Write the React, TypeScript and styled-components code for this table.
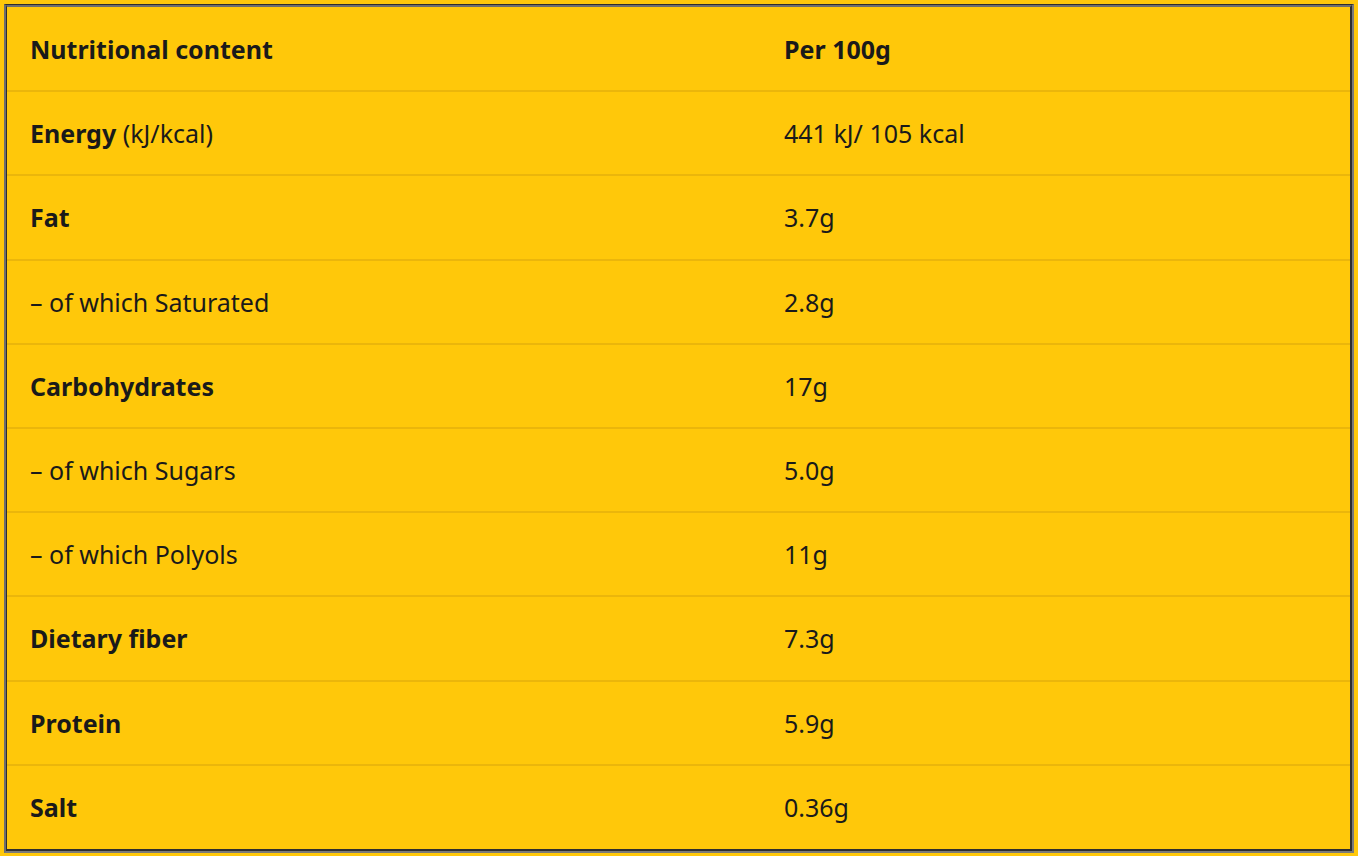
import { createGlobalStyle } from "styled-components";
import styled from "styled-components";

const GlobalStyle = createGlobalStyle`
  html, body {
    margin: 0;
    padding: 0;
    background: #ffc80a;
  }
  body {
    font-family: "Noto Sans", "Open Sans", sans-serif;
    color: #1a1a1a;
  }
`;

const Page = styled.div`
  padding: 4px 4px 4px 4px;
  width: 1358px;
  box-sizing: border-box;
`;

const OuterFrame = styled.div`
  border-top: 1px solid #2e2e2e;
  border-left: 2px solid #6e6e6e;
  border-right: 2px solid #7a7a7a;
  border-bottom: 2px solid #7a7a7a;
`;

const InnerFrame = styled.div`
  border-top: 2px solid #6e6e6e;
  border-left: 1px solid #2e2e2e;
  border-right: 2px solid #2e2e2e;
  border-bottom: 2px solid #2e2e2e;
`;

const Table = styled.table`
  width: 100%;
  border-collapse: collapse;
  font-size: 25px;
  line-height: 32px;
`;

const Row = styled.tr`
  height: 84.2px;
  border-top: 2px solid #ebb60b;

  &:first-child {
    border-top: none;
  }
`;

const Cell = styled.td<{ $first?: boolean; $bold?: boolean }>`
  padding: 0 23px;
  width: ${(p) => (p.$first ? "754px" : "auto")};
  font-weight: ${(p) => (p.$bold ? 700 : 400)};
  vertical-align: middle;
  box-sizing: border-box;
`;

const Strong = styled.strong`
  font-weight: 700;
`;

type Item = { label: React.ReactNode; value: string; bold?: boolean };

const rows: Item[] = [
  {
    label: (
      <>
        <Strong>Energy</Strong> (kJ/kcal)
      </>
    ),
    value: "441 kJ/ 105 kcal",
  },
  { label: "Fat", value: "3.7g", bold: true },
  { label: "– of which Saturated", value: "2.8g" },
  { label: "Carbohydrates", value: "17g", bold: true },
  { label: "– of which Sugars", value: "5.0g" },
  { label: "– of which Polyols", value: "11g" },
  { label: "Dietary fiber", value: "7.3g", bold: true },
  { label: "Protein", value: "5.9g", bold: true },
  { label: "Salt", value: "0.36g", bold: true },
];

export default function App() {
  return (
    <>
      <GlobalStyle />
      <Page>
        <OuterFrame>
          <InnerFrame>
            <Table>
              <tbody>
                <Row>
                  <Cell $first $bold>
                    Nutritional content
                  </Cell>
                  <Cell $bold>Per 100g</Cell>
                </Row>
                {rows.map((r, i) => (
                  <Row key={i}>
                    <Cell $first $bold={r.bold}>
                      {r.label}
                    </Cell>
                    <Cell>{r.value}</Cell>
                  </Row>
                ))}
              </tbody>
            </Table>
          </InnerFrame>
        </OuterFrame>
      </Page>
    </>
  );
}
